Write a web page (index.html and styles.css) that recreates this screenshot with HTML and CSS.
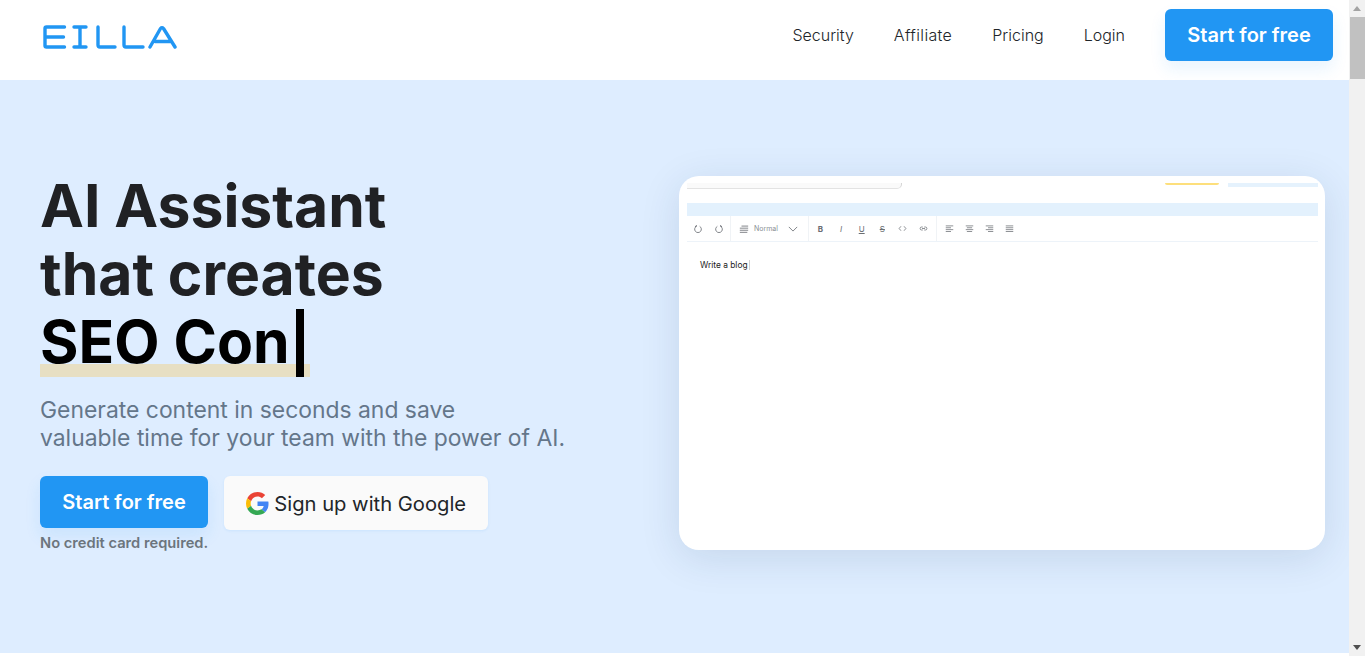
FILE: index.html
```html
<!DOCTYPE html>
<html lang="en">
<head>
    <meta charset="UTF-8">
    <meta name="viewport" content="width=device-width, initial-scale=1.0">
    <title>Eilla - AI Assistant</title>
    <link rel="stylesheet" href="styles.css">
</head>
<body>
    <div class="page">
        <header class="navbar">
            <a class="logo" href="#">
                <svg width="134" height="25" viewBox="0 0 134 25" fill="none" stroke="#2196f3" stroke-width="3.400" stroke-linecap="round" stroke-linejoin="round">
                    <path d="M21.500 2H3.500Q2 2 2 3.500V20.500Q2 22 3.500 22H21.500M3 12H20.500"/>
                    <path d="M31 2H43M31 22H43M37 2V22"/>
                    <path d="M55 2V20Q55 22 57 22H72"/>
                    <path d="M81 2V20Q81 22 83 22H100"/>
                    <path d="M107 22L117.500 3.500Q119 1.800 120.500 3.500L132 22M112 16.500H127"/>
                </svg>
            </a>
            <nav class="nav-links">
                <a href="#">Security</a>
                <a class="nav-wide" href="#">Affiliate</a>
                <a href="#">Pricing</a>
                <a href="#">Login</a>
            </nav>
            <a class="btn btn-primary nav-btn" href="#">Start for free</a>
        </header>

        <main class="hero">
            <section class="hero-text">
                <h1>AI Assistant<br>that creates<br><span class="typed">SEO Con<i class="caret"></i></span></h1>
                <p class="lead">Generate content in seconds and save<br>valuable time for your team with the power of AI.</p>
                <div class="actions">
                    <div>
                        <a class="btn btn-primary" href="#">Start for free</a>
                        <p class="note">No credit card required.</p>
                    </div>
                    <a class="btn btn-google" href="#">
                        <svg width="23" height="23" viewBox="0 0 48 48">
                            <path fill="#ea4335" d="M24 9.500c3.500 0 6.700 1.200 9.200 3.600l6.900-6.900C35.900 2.400 30.500 0 24 0 14.600 0 6.500 5.400 2.600 13.200l8 6.200C12.500 13.600 17.800 9.500 24 9.500z"/>
                            <path fill="#4285f4" d="M47 24.500c0-1.600-.1-3.100-.4-4.500H24v9h12.900c-.6 3-2.200 5.500-4.700 7.200l7.700 6c4.500-4.200 7.100-10.300 7.100-17.700z"/>
                            <path fill="#fbbc05" d="M10.500 28.600c-.5-1.400-.8-3-.8-4.600s.3-3.200.8-4.600l-8-6.200C.9 16.500 0 20.100 0 24s.9 7.500 2.600 10.800l7.900-6.200z"/>
                            <path fill="#34a853" d="M24 48c6.500 0 11.900-2.100 15.900-5.800l-7.700-6c-2.200 1.400-4.900 2.300-8.200 2.300-6.200 0-11.500-4.200-13.400-9.900l-8 6.200C6.500 42.600 14.600 48 24 48z"/>
                        </svg>
                        Sign up with Google
                    </a>
                </div>
            </section>

            <section class="preview">
                <div class="preview-top">
                    <div class="fake-input"></div>
                    <div class="yellow-bar"></div>
                    <div class="blue-bar"></div>
                </div>
                <div class="preview-strip"></div>
                <div class="toolbar">
                    <div class="tool-group history">
                        <svg class="tool" viewBox="0 0 12 12"><path d="M4 2.800A4 4 0 1 0 8 2.800M4 1.200V3H2.400"/></svg>
                        <svg class="tool" viewBox="0 0 12 12"><path d="M8 2.800A4 4 0 1 1 4 2.800M8 1.200V3H9.600"/></svg>
                    </div>
                    <div class="tool-group format-group">
                        <svg class="tool" viewBox="0 0 12 12"><path d="M3 2.500H11M1 5H11M1 7.500H11M1 10H10"/></svg>
                        <span class="format-name">Normal</span>
                        <svg class="tool chevron" viewBox="0 0 12 12"><path d="M1 3.500L6 8.500L11 3.500"/></svg>
                    </div>
                    <div class="tool-group marks">
                        <span class="tool-letter bold">B</span>
                        <span class="tool-letter italic">I</span>
                        <span class="tool-letter underline">U</span>
                        <span class="tool-letter strike">S</span>
                        <svg class="tool" viewBox="0 0 12 12"><path d="M4 3L1.500 6L4 9M8 3L10.500 6L8 9"/></svg>
                        <svg class="tool" viewBox="0 0 12 12"><path d="M5 4H3.500A2 2 0 0 0 3.500 8H5M7 4H8.500A2 2 0 0 1 8.500 8H7M4 6H8"/></svg>
                    </div>
                    <div class="tool-group last">
                        <svg class="tool" viewBox="0 0 12 12"><path d="M1 2.500H11M1 5H8M1 7.500H11M1 10H8"/></svg>
                        <svg class="tool" viewBox="0 0 12 12"><path d="M1 2.500H11M2.500 5H9.500M1 7.500H11M2.500 10H9.500"/></svg>
                        <svg class="tool" viewBox="0 0 12 12"><path d="M1 2.500H11M4 5H11M1 7.500H11M4 10H11"/></svg>
                        <svg class="tool" viewBox="0 0 12 12"><path d="M1 2.500H11M1 5H11M1 7.500H11M1 10H11"/></svg>
                    </div>
                </div>
                <div class="editor">Write a blog<i class="editor-caret"></i></div>
            </section>
        </main>
        <div class="page-end"></div>
    </div>

    <div class="scrollbar">
        <div class="arrow arrow-up"></div>
        <div class="thumb"></div>
        <div class="arrow arrow-down"></div>
    </div>
</body>
</html>
```

FILE: styles.css
```css
* {
    box-sizing: border-box;
}

html, body {
    margin: 0;
    height: 100%;
    overflow: hidden;
}

body {
    display: flex;
    font-family: Inter, "Liberation Sans", sans-serif;
    font-variant-ligatures: none;
    background: #fff;
}

a {
    text-decoration: none;
}

.page {
    flex: 1;
    min-width: 0;
    display: flex;
    flex-direction: column;
}

.navbar {
    height: 80px;
    flex: none;
    display: flex;
    align-items: center;
    padding: 0 16px 10px 43px;
    background: #fff;
}

.logo {
    display: flex;
    margin-top: 4px;
}

.nav-links {
    margin-left: auto;
    display: flex;
    gap: 40px;
}

.nav-links a {
    font-size: 16px;
    font-weight: 300;
    color: #212529;
}

.nav-links .nav-wide {
    letter-spacing: 0.35px;
}

.btn {
    display: inline-flex;
    align-items: center;
    justify-content: center;
    border-radius: 6px;
    font-size: 20px;
    font-weight: 600;
}

.btn-primary {
    width: 168px;
    height: 52px;
    background: #2196f3;
    color: #fff;
    box-shadow: 0 8px 16px rgba(33, 150, 243, 0.1);
}

.nav-btn {
    margin-left: 40px;
}

.hero {
    flex: 1;
    display: flex;
    justify-content: space-between;
    padding: 92px 24px 0 40px;
    background: #deedff;
}

.hero-text h1 {
    margin: 0;
    font-size: 58.800px;
    line-height: 68px;
    font-weight: 700;
    color: #202124;
}

.typed {
    position: relative;
    display: inline-block;
    padding: 0 20px 1px 0;
    color: #000;
    background: linear-gradient(#e7dfc3, #e7dfc3) 0 56px / 100% 13px no-repeat;
}

.caret {
    position: absolute;
    right: 6px;
    top: 1px;
    width: 8px;
    height: 68px;
    background: #000;
}

.lead {
    margin: 19px 0 0;
    font-size: 22.900px;
    line-height: 28px;
    font-weight: 400;
    color: #64768a;
}

.actions {
    display: flex;
    gap: 16px;
    margin-top: 24px;
}

.note {
    margin: 7px 0 0;
    font-size: 14.700px;
    line-height: 16px;
    font-weight: 600;
    color: #6c757d;
}

.btn-google {
    width: 264px;
    height: 54px;
    gap: 5px;
    background: #fafafa;
    color: #212529;
    font-weight: 400;
    font-size: 20.200px;
    box-shadow: 0 1px 3px rgba(33, 150, 243, 0.1);
}

.preview {
    width: 646px;
    height: 374px;
    margin-top: 4px;
    padding: 0 7px 0 8px;
    overflow: hidden;
    background: #fff;
    border-radius: 20px;
    box-shadow: 0 8px 40px rgba(20, 50, 90, 0.12);
}

.preview-top {
    position: relative;
    height: 20px;
    margin-top: 7px;
}

.fake-input {
    width: 215px;
    height: 6px;
    border-bottom: 1px solid #e3e3e3;
    border-right: 1px solid #d5d5d5;
    border-bottom-right-radius: 5px;
    background: #fafafa;
}

.yellow-bar {
    position: absolute;
    top: 0;
    left: 478px;
    width: 54px;
    height: 2px;
    border-radius: 0 0 3px 3px;
    background: #fddf7c;
}

.blue-bar {
    position: absolute;
    top: 0;
    left: 541px;
    width: 90px;
    height: 4px;
    background: #e5f2fd;
}

.preview-strip {
    height: 13px;
    background: #e3f1fd;
}

.toolbar {
    height: 26px;
    display: flex;
    align-items: center;
    border-bottom: 1px solid #edf3f9;
}

.tool-group {
    height: 100%;
    display: flex;
    align-items: center;
    gap: 11px;
    padding: 0 7px 0 6px;
    border-right: 1px solid #f0f3f6;
}

.tool-group.history {
    padding-right: 6px;
}

.tool-group.last {
    border-right: none;
    padding-left: 8px;
}

.marks {
    gap: 11.600px;
    padding: 0 8px 0 7px;
}

.format-group {
    width: 78px;
    gap: 5px;
    padding-left: 8px;
}

.tool {
    width: 10px;
    height: 10px;
    flex: none;
    fill: none;
    stroke: #6a6e73;
    stroke-width: 1;
}

.marks .tool,
.last .tool {
    width: 9px;
    height: 9px;
}

.chevron {
    margin-left: auto;
    margin-right: 3px;
}

.format-name {
    font-size: 7px;
    color: #8a8f95;
}

.tool-letter {
    width: 9px;
    text-align: center;
    font-size: 8px;
    color: #6a6e73;
}

.bold {
    font-weight: 700;
}

.italic {
    font-style: italic;
}

.underline {
    text-decoration: underline;
}

.strike {
    text-decoration: line-through;
}

.editor {
    padding: 17px 0 0 13px;
    font-size: 8.400px;
    line-height: 12px;
    color: #222;
}

.editor-caret {
    display: inline-block;
    width: 1px;
    height: 10px;
    margin-left: 1px;
    vertical-align: -2px;
    background: #cfcfcf;
}

.page-end {
    height: 3px;
    flex: none;
    background: #fff;
}

.scrollbar {
    width: 16px;
    flex: none;
    display: flex;
    flex-direction: column;
    align-items: center;
    background: #f1f1f1;
}

.arrow {
    height: 0;
    width: 0;
    flex: none;
    border-left: 4px solid transparent;
    border-right: 4px solid transparent;
}

.arrow-up {
    margin: 6px 0;
    border-bottom: 5px solid #a3a3a3;
}

.arrow-down {
    margin: auto 0 6px;
    border-top: 5px solid #505050;
}

.thumb {
    width: 15px;
    height: 62px;
    background: #c1c1c1;
}
```
